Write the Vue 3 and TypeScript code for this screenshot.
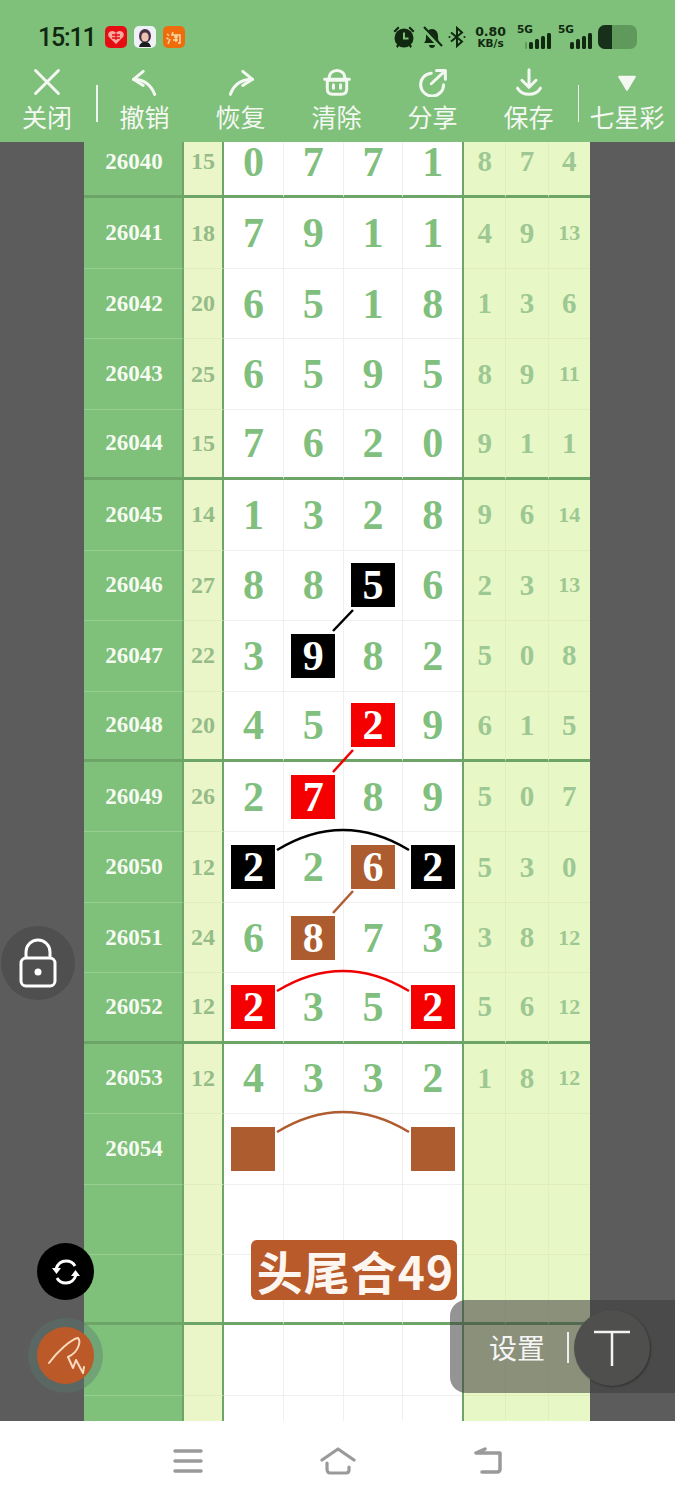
<script setup lang="ts">
type RowType = {
  id: string;
  sum: string;
  digits: string[];
  tail: string[];
};

type MarkColor = 'black' | 'red' | 'brown';

const raw: [string, string, string, string[]][] = [
  ['26040', '15', '0771', ['8', '7', '4']],
  ['26041', '18', '7911', ['4', '9', '13']],
  ['26042', '20', '6518', ['1', '3', '6']],
  ['26043', '25', '6595', ['8', '9', '11']],
  ['26044', '15', '7620', ['9', '1', '1']],
  ['26045', '14', '1328', ['9', '6', '14']],
  ['26046', '27', '8856', ['2', '3', '13']],
  ['26047', '22', '3982', ['5', '0', '8']],
  ['26048', '20', '4529', ['6', '1', '5']],
  ['26049', '26', '2789', ['5', '0', '7']],
  ['26050', '12', '2262', ['5', '3', '0']],
  ['26051', '24', '6873', ['3', '8', '12']],
  ['26052', '12', '2352', ['5', '6', '12']],
  ['26053', '12', '4332', ['1', '8', '12']],
  ['26054', '', '    ', ['', '', '']],
  ['', '', '    ', ['', '', '']],
  ['', '', '    ', ['', '', '']],
  ['', '', '    ', ['', '', '']],
  ['', '', '    ', ['', '', '']],
];

const rows: RowType[] = raw.map(([id, sum, digits, tail]) => ({
  id,
  sum,
  digits: digits.split('').map(d => d.trim()),
  tail,
}));

// row index - digit column - color
const marks: Record<string, MarkColor> = {
  '6-2': 'black',
  '7-1': 'black',
  '8-2': 'red',
  '9-1': 'red',
  '10-0': 'black',
  '10-2': 'brown',
  '10-3': 'black',
  '11-1': 'brown',
  '12-0': 'red',
  '12-3': 'red',
  '14-0': 'brown',
  '14-3': 'brown',
};

const markOf = (row: number, col: number) => marks[`${row}-${col}`];

const tools = [
  { name: 'close', label: '关闭' },
  { name: 'undo', label: '撤销' },
  { name: 'redo', label: '恢复' },
  { name: 'clear', label: '清除' },
  { name: 'share', label: '分享' },
  { name: 'save', label: '保存' },
];
</script>

<template>
  <div class="page">
    <header class="top">
      <div class="status">
        <span class="time">15:11</span>
        <div class="apps">
          <svg width="22" height="22" viewBox="0 0 22 22">
            <rect width="22" height="22" rx="5" fill="#e60d12" />
            <path d="M11 18 4 11c-2-3 0-6 3.500-6C9 5 10.500 6 11 7c.5-1 2-2 3.500-2C18 5 20 8 18 11z" fill="#f7a8a0" />
            <path d="M7 9h8M7 12h8M11 7v7" stroke="#e60d12" stroke-width="1.300" />
          </svg>
          <svg width="22" height="22" viewBox="0 0 22 22">
            <rect width="22" height="22" rx="5" fill="#eef1f6" />
            <ellipse cx="11" cy="10" rx="6" ry="7" fill="#4a3045" />
            <ellipse cx="11" cy="11" rx="3.600" ry="4.500" fill="#eec2b2" />
            <path d="M5 21c1-4 3-5 6-5s5 1 6 5z" fill="#1c1c1c" />
          </svg>
          <svg width="22" height="22" viewBox="0 0 22 22">
            <rect width="22" height="22" rx="5" fill="#ef6c0c" />
            <path d="M4 8l2 1.500M3.500 12l2 1M5 18l2-5M10 6l-1 3h8v8h-2M11 11h4M13 9v7M10 14h5" stroke="#fdd9a6" stroke-width="1.500" fill="none" />
          </svg>
        </div>
        <div class="indicators">
          <svg width="24" height="24" viewBox="0 0 24 24" fill="#10280f">
            <circle cx="12" cy="13" r="9.500" />
            <path d="M1.500 6 6 1.500 7.500 3 3 7.500zM22.500 6 18 1.500 16.500 3 21 7.500zM4 21l2-2 1.500 1.500-2 2.500zM20 21l-2-2-1.500 1.500 2 2.500z" />
            <path d="M12 7.500v6h4.500" stroke="#7fc07a" stroke-width="2" fill="none" />
          </svg>
          <svg width="22" height="24" viewBox="0 0 22 24" fill="#10280f">
            <path d="M3 18c2-2 2-4 2-7 0-4 2.500-7 6-7s6 3 6 7c0 3 0 5 2 7z" />
            <path d="M8 20h6c0 2-1.500 3-3 3s-3-1-3-3z" />
            <path d="M2 3 20 22" stroke="#7fc07a" stroke-width="4.500" />
            <path d="M3 2 21 21" stroke="#10280f" stroke-width="2" />
          </svg>
          <svg class="bt" width="18" height="22" viewBox="0 0 18 22" fill="none" stroke="#10280f" stroke-width="2">
            <path d="M3 6.500 14 15.500 9 20V2l5 4.500L3 15.500" />
            <circle cx="1.500" cy="11" r="1" fill="#10280f" stroke="none" />
            <circle cx="16.500" cy="11" r="1" fill="#10280f" stroke="none" />
          </svg>
          <div class="speed">
            <span class="speed-num">0.80</span>
            <span class="speed-unit">KB/s</span>
          </div>
          <div class="signal">
            <span class="net">5G</span>
            <div class="bars">
              <i class="faint" style="height: 7px"></i>
              <i style="height: 7px"></i>
              <i style="height: 10px"></i>
              <i style="height: 13px"></i>
              <i style="height: 16px"></i>
            </div>
          </div>
          <div class="signal second">
            <span class="net">5G</span>
            <div class="bars">
              <i style="height: 7px"></i>
              <i style="height: 10px"></i>
              <i style="height: 13px"></i>
              <i style="height: 16px"></i>
            </div>
          </div>
          <div class="battery">
            <div class="level"></div>
          </div>
        </div>
      </div>

      <nav class="toolbar">
        <template v-for="(tool, i) in tools" :key="tool.name">
          <div class="tool" :class="tool.name">
            <svg width="30" height="30" viewBox="0 0 34 34" fill="none" stroke="#f4f8f2" stroke-width="3.400" stroke-linecap="round" stroke-linejoin="round">
              <path v-if="tool.name === 'close'" d="M4 4 30 30M30 4 4 30" />
              <template v-else-if="tool.name === 'undo'">
                <path d="M15 5 4 14l11 7" />
                <path d="M4 14c11 0 19 5 24 17" fill="none" />
              </template>
              <template v-else-if="tool.name === 'redo'">
                <path d="M19 5l11 9-11 7" />
                <path d="M30 14C18 14 9 20 5 31" />
              </template>
              <template v-else-if="tool.name === 'clear'">
                <path d="M6 15h22v10c0 4-2 6-6 6H12c-4 0-6-2-6-6z" />
                <path d="M3 14h28M8 14c0-7 4-10 9-10s9 3 9 10" />
                <path d="M13 20v4M21 20v4" />
              </template>
              <template v-else-if="tool.name === 'share'">
                <path d="M15 7A13 13 0 1 0 29 20" />
                <path d="M15 19 30 5M21 4h10v10" />
              </template>
              <template v-else>
                <path d="M17 3v20M9 15l8 8 8-8" />
                <path d="M4 24c3 5 8 7 13 7s10-2 13-7" />
              </template>
            </svg>
            <span class="tool-label">{{ tool.label }}</span>
          </div>
          <span v-if="i === 0" class="divider"></span>
        </template>
        <span class="divider"></span>
        <div class="tool lottery">
          <svg width="30" height="30" viewBox="0 0 34 34">
            <path d="M8 11h18L17 26z" fill="#f4f8f2" stroke="#f4f8f2" stroke-width="2" stroke-linejoin="round" />
          </svg>
          <span class="tool-label">七星彩</span>
        </div>
      </nav>
    </header>

    <main class="board">
      <div class="table">
        <div v-for="(row, r) in rows" :key="r" class="row" :class="{ thick: r % 4 === 0 }">
          <div class="cell issue">{{ row.id }}</div>
          <div class="cell sum">{{ row.sum }}</div>
          <div class="digits">
            <div v-for="(d, c) in row.digits" :key="c" class="cell digit">
              <span v-if="markOf(r, c)" class="mark" :class="markOf(r, c)">{{ d }}</span>
              <template v-else>{{ d }}</template>
            </div>
          </div>
          <div class="tails">
            <div v-for="(t, c) in row.tail" :key="c" class="cell tail" :class="{ small: t.length > 1 }">{{ t }}</div>
          </div>
        </div>
      </div>
    </main>

    <footer class="nav">
      <svg width="30" height="26" viewBox="0 0 30 26" fill="none" stroke="#9a9a9a" stroke-width="3.500" stroke-linecap="round">
        <path d="M2 3h26M2 13h26M2 23h26" />
      </svg>
      <svg width="36" height="28" viewBox="0 0 36 28" fill="none" stroke="#9a9a9a" stroke-width="3.200" stroke-linecap="round" stroke-linejoin="round">
        <path d="M2 13 18 2l16 11M7 16v6c0 2 1 4 3 4h16c2 0 3-1 3-3v-3" />
      </svg>
      <svg width="30" height="28" viewBox="0 0 30 28" fill="none" stroke="#9a9a9a" stroke-width="3.500" stroke-linecap="round" stroke-linejoin="round">
        <path d="M12 2 3 6h24v16c0 2-1 3-3 3H9" />
      </svg>
    </footer>

    <svg class="links" width="675" height="1500" viewBox="0 0 675 1500" fill="none" stroke-width="2.500">
      <path d="M353 610 333 631" stroke="#000" />
      <path d="M353 750 333 772" stroke="#f00000" />
      <path d="M353 891 333 913" stroke="#b05c30" />
      <path d="M277 850Q343 810 409 850" stroke="#000" />
      <path d="M277 991Q343 951 409 991" stroke="#f00000" />
      <path d="M277 1132Q343 1092 409 1132" stroke="#b05c30" />
    </svg>

    <div class="result">头尾合49</div>

    <div class="float lock">
      <svg width="38" height="50" viewBox="0 0 38 50" fill="none" stroke="#fff" stroke-width="3">
        <rect x="2" y="20" width="34" height="28" rx="5" />
        <path d="M7 20v-6a12 12 0 0 1 24 0v6" />
        <circle cx="19" cy="34" r="3.500" fill="#fff" stroke="none" />
      </svg>
    </div>
    <div class="float sync">
      <svg width="30" height="28" viewBox="0 0 30 28" fill="none" stroke="#fff" stroke-width="2.800">
        <path d="M5 11C7 5 11 3 15 3c4 0 7 1 9 5M25 17c-2 6-6 8-10 8-4 0-7-1-9-5" />
        <path d="M1 10h9l-4.500 6zM20 18h9l-4.500-6z" fill="#fff" stroke="none" />
      </svg>
    </div>
    <div class="float pen">
      <svg width="38" height="40" viewBox="0 0 38 40" fill="none" stroke="#fbd9bd" stroke-width="2" stroke-linecap="round" stroke-linejoin="round">
        <path d="M2 27C10 16 24 3 31 2c3 3 1 14-10 19l5 11 3-8 7 13 1-6" />
      </svg>
    </div>

    <div class="settings">
      <span class="settings-text">设置</span>
      <span class="settings-bar"></span>
    </div>
    <div class="float text-tool">
      <svg width="38" height="36" viewBox="0 0 38 36" stroke="#f4f4f4" stroke-width="2.500" fill="none">
        <path d="M1 2h36M19 2v34" />
      </svg>
    </div>
  </div>
</template>

<style>
html,
body {
  margin: 0;
  background: #fff;
}
</style>

<style scoped>
.page {
  position: relative;
  display: flex;
  flex-direction: column;
  width: 675px;
  height: 1500px;
  overflow: hidden;
  font-family: 'Noto Sans CJK SC', 'Noto Sans', sans-serif;
}

.top {
  flex: none;
  height: 142px;
  background: #7fc07a;
  box-sizing: border-box;
  padding-top: 25px;
}

.status {
  display: flex;
  align-items: center;
  height: 24px;
  padding-left: 38px;
}

.time {
  font-family: Roboto, 'Noto Sans', sans-serif;
  font-size: 25px;
  font-weight: 500;
  color: #10280f;
  letter-spacing: -1.200px;
}

.apps {
  display: flex;
  gap: 7px;
  margin-left: 10px;
}

.indicators {
  display: flex;
  align-items: center;
  margin-left: auto;
  margin-right: 38px;
}

.bt {
  margin-left: 6px;
}

.indicators > svg + svg {
  margin-left: 5px;
}

.speed {
  display: flex;
  flex-direction: column;
  align-items: center;
  margin-left: 9px;
  font-family: 'DejaVu Sans', sans-serif;
  font-weight: 700;
  color: #10280f;
}

.speed-num {
  font-size: 12.500px;
  line-height: 13px;
}

.speed-unit {
  font-size: 10.500px;
  line-height: 11px;
}

.signal {
  position: relative;
  width: 36px;
  height: 24px;
  margin-left: 9px;
}

.signal.second {
  margin-left: 5px;
}

.net {
  position: absolute;
  left: 2px;
  top: -2px;
  font-family: 'DejaVu Sans', sans-serif;
  font-size: 10.500px;
  font-weight: 700;
  color: #10280f;
}

.bars {
  position: absolute;
  right: 0;
  bottom: 0;
  display: flex;
  align-items: flex-end;
  gap: 2px;
}

.bars i {
  display: block;
  width: 4px;
  border-radius: 1.500px;
  background: #10280f;
}

.bars i.faint {
  width: 2px;
  opacity: 0.25;
}

.battery {
  width: 39px;
  height: 24px;
  margin-left: 6px;
  border-radius: 7px;
  background: #5f9a5c;
  overflow: hidden;
}

.level {
  width: 14px;
  height: 100%;
  background: #16301a;
}

.toolbar {
  display: flex;
  align-items: flex-start;
  margin-top: 15px;
  height: 78px;
  padding-left: 22px;
}

.tool {
  display: flex;
  flex-direction: column;
  align-items: center;
  flex: none;
  width: 50px;
  margin-right: 46px;
}

.tool svg {
  display: block;
  margin: 3px 0 1px;
}

.tool-label {
  margin-top: 0;
  font-size: 25px;
  line-height: 36px;
  color: #f4f8f2;
  white-space: nowrap;
}

.tool.close {
  margin-right: 24px;
}

.tool.undo {
  margin-left: 22px;
}

.tool.save {
  margin-right: 24px;
}

.tool.lottery {
  margin: 0 0 0 10px;
  width: 76px;
}

.divider {
  flex: none;
  width: 1.500px;
  height: 37px;
  margin-top: 21px;
  background: #eef5ec;
}

.board {
  flex: 1;
  min-height: 0;
  overflow: hidden;
  background: #5c5c5c;
}

.table {
  width: 506px;
  margin: -14px 0 0 84px;
}

.row {
  display: flex;
  height: 70.450px;
  box-sizing: border-box;
}

.cell {
  display: flex;
  align-items: center;
  justify-content: center;
  box-sizing: border-box;
  font-family: 'Liberation Serif', serif;
  font-weight: 700;
}

.issue {
  flex: none;
  width: 100px;
  padding-left: 2px;
  background: #7fc07a;
  border-right: 2px solid #6da568;
  border-bottom: 1px solid #97cf92;
  color: #f6fbf2;
  font-size: 23px;
}

.sum {
  flex: none;
  width: 40px;
  background: #eaf6c8;
  border-right: 2px solid #6da568;
  border-bottom: 1px solid #dfeebb;
  color: #95bb88;
  font-size: 24px;
}

.digits {
  flex: none;
  display: flex;
  width: 240px;
  border-right: 2px solid #6da568;
  box-sizing: border-box;
  background: #fff;
}

.digit {
  flex: 1;
  border-right: 1px solid #efefef;
  border-bottom: 1px solid #efefef;
  color: #80bf7d;
  font-size: 42px;
  line-height: 36px;
}

.digit:last-child {
  border-right: none;
}

.mark {
  display: flex;
  align-items: center;
  justify-content: center;
  width: 44px;
  height: 44px;
  color: #fff;
}

.mark.black {
  background: #000;
}

.mark.red {
  background: #f50000;
}

.mark.brown {
  background: #ad5c2f;
}

.tails {
  flex: 1;
  display: flex;
  background: #e8f7c6;
}

.tail {
  flex: 1;
  border-right: 1px solid #e0f0bc;
  border-bottom: 1px solid #dfeebb;
  color: #9dc893;
  font-size: 29px;
}

.tail:last-child {
  border-right: none;
}

.tail.small {
  font-size: 22px;
}

.row.thick .issue,
.row.thick .sum,
.row.thick .digit,
.row.thick .tail {
  border-bottom: 3px solid #6da568;
}

.nav {
  flex: none;
  height: 79px;
  box-sizing: border-box;
  display: flex;
  align-items: center;
  justify-content: center;
  gap: 117px;
  background: #fff;
}

.links {
  position: absolute;
  left: 0;
  top: 0;
  pointer-events: none;
}

.result {
  position: absolute;
  left: 251px;
  top: 1240px;
  display: flex;
  align-items: center;
  justify-content: center;
  box-sizing: border-box;
  width: 206px;
  height: 60px;
  padding-left: 3px;
  border-radius: 6px;
  background: #b85a2a;
  color: #fdf6f0;
  font-size: 46px;
  font-weight: 700;
  letter-spacing: 1px;
  line-height: 1;
  white-space: nowrap;
}

.float {
  position: absolute;
  display: flex;
  align-items: center;
  justify-content: center;
  border-radius: 50%;
}

.lock {
  left: 1px;
  top: 926px;
  width: 74px;
  height: 74px;
  background: #4f4f4f;
}

.sync {
  left: 37px;
  top: 1243px;
  width: 57px;
  height: 57px;
  background: #000;
}

.pen {
  left: 37px;
  top: 1327px;
  width: 57px;
  height: 57px;
  background: #bb5a28;
  box-shadow: 0 0 0 9px rgba(90, 120, 110, 0.4);
}

.settings {
  position: absolute;
  left: 450px;
  top: 1300px;
  width: 225px;
  height: 93px;
  display: flex;
  align-items: center;
  box-sizing: border-box;
  padding-left: 39px;
  border-radius: 16px 0 0 16px;
  background: rgba(60, 60, 60, 0.55);
}

.settings-text {
  color: #f5f5f5;
  font-size: 28px;
}

.settings-bar {
  width: 2px;
  height: 31px;
  margin: 2px 0 0 22px;
  background: #eee;
}

.text-tool {
  left: 574px;
  top: 1310px;
  width: 76px;
  height: 76px;
  background: #4f4f4d;
  box-shadow: 1px 1px 2px rgba(0, 0, 0, 0.35);
}
</style>
